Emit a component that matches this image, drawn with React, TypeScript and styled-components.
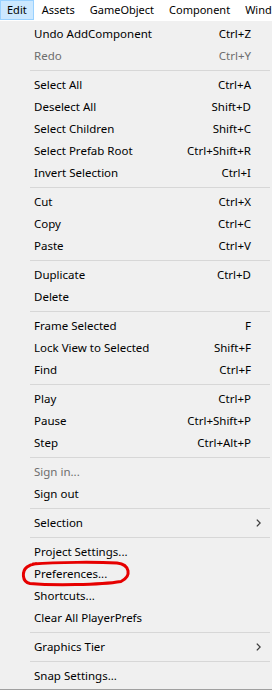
import styled, { createGlobalStyle } from "styled-components";

const GlobalStyle = createGlobalStyle`
  html, body {
    margin: 0;
    padding: 0;
    background: #ffffff;
  }
  body {
    font-family: "Noto Sans", "Open Sans", sans-serif;
    font-size: 11.5px;
    color: #000000;
    overflow: hidden;
  }
`;

type Item = {
  label: string;
  shortcut?: string;
  disabled?: boolean;
  submenu?: boolean;
  circled?: boolean;
};

const groups: Item[][] = [
  [
    { label: "Undo AddComponent", shortcut: "Ctrl+Z" },
    { label: "Redo", shortcut: "Ctrl+Y", disabled: true },
  ],
  [
    { label: "Select All", shortcut: "Ctrl+A" },
    { label: "Deselect All", shortcut: "Shift+D" },
    { label: "Select Children", shortcut: "Shift+C" },
    { label: "Select Prefab Root", shortcut: "Ctrl+Shift+R" },
    { label: "Invert Selection", shortcut: "Ctrl+I" },
  ],
  [
    { label: "Cut", shortcut: "Ctrl+X" },
    { label: "Copy", shortcut: "Ctrl+C" },
    { label: "Paste", shortcut: "Ctrl+V" },
  ],
  [
    { label: "Duplicate", shortcut: "Ctrl+D" },
    { label: "Delete" },
  ],
  [
    { label: "Frame Selected", shortcut: "F" },
    { label: "Lock View to Selected", shortcut: "Shift+F" },
    { label: "Find", shortcut: "Ctrl+F" },
  ],
  [
    { label: "Play", shortcut: "Ctrl+P" },
    { label: "Pause", shortcut: "Ctrl+Shift+P" },
    { label: "Step", shortcut: "Ctrl+Alt+P" },
  ],
  [
    { label: "Sign in...", disabled: true },
    { label: "Sign out" },
  ],
  [{ label: "Selection", submenu: true }],
  [
    { label: "Project Settings..." },
    { label: "Preferences...", circled: true },
    { label: "Shortcuts..." },
    { label: "Clear All PlayerPrefs" },
  ],
  [{ label: "Graphics Tier", submenu: true }],
  [{ label: "Snap Settings..." }],
];

const menuBarItems = ["Edit", "Assets", "GameObject", "Component", "Wind"];

const MenuBar = styled.div`
  display: flex;
  align-items: flex-start;
  height: 21px;
  background: #ffffff;
  font-size: 11px;
  white-space: nowrap;
  overflow: hidden;
`;

const BarItem = styled.div<{ $active?: boolean }>`
  height: 20px;
  line-height: 17px;
  padding: 0 6px;
  margin-right: 1px;
  box-sizing: border-box;
  border: 1px solid ${(p) => (p.$active ? "#99d1ff" : "transparent")};
  background: ${(p) => (p.$active ? "#cce8ff" : "transparent")};
`;

const Dropdown = styled.div`
  width: 272px;
  background: #f0f0f0;
  padding: 2px 0;
  border-bottom: 1px solid #a0a0a0;
  box-shadow: 0 1px 0 #6b6b6b;
`;

const Row = styled.div<{ $disabled?: boolean }>`
  position: relative;
  display: flex;
  align-items: center;
  height: 22px;
  line-height: 20px;
  padding-left: 34px;
  color: ${(p) => (p.$disabled ? "#6d6d6d" : "#000000")};
  white-space: nowrap;
`;

const Label = styled.span`
  flex: 1;
`;

const Shortcut = styled.span`
  text-align: right;
`;

const ArrowCell = styled.span`
  width: 21px;
  height: 22px;
  display: flex;
  align-items: center;
  padding-left: 5px;
  box-sizing: border-box;
`;

const Separator = styled.div`
  height: 7px;
  display: flex;
  align-items: center;
  padding: 0 2px 0 30px;

  &::after {
    content: "";
    flex: 1;
    height: 1px;
    background: #d7d7d7;
  }
`;

const Circle = styled.svg`
  position: absolute;
  left: 0;
  top: 0;
  overflow: visible;
  pointer-events: none;
`;

function Chevron() {
  return (
    <svg width="5" height="8" viewBox="0 0 5 8">
      <path d="M0.8 0.6 L4.2 4 L0.8 7.4" fill="none" stroke="#3c3c3c" strokeWidth="1.3" />
    </svg>
  );
}

function MenuRow({ item }: { item: Item }) {
  return (
    <Row $disabled={item.disabled}>
      <Label>{item.label}</Label>
      {item.shortcut && <Shortcut>{item.shortcut}</Shortcut>}
      <ArrowCell>{item.submenu && <Chevron />}</ArrowCell>
      {item.circled && (
        <Circle width="140" height="24">
          <path
            d="M33 1 C58 -1 98 -1 117 0 C130 1.5 132 13 121 18.5 C100 22 52 22.5 30 20.5 C21.5 19 22 8 27 4 C29 2.5 31 1.5 36 0.8"
            fill="none"
            stroke="#e60000"
            strokeWidth="3"
            strokeLinecap="round"
            strokeLinejoin="round"
          />
        </Circle>
      )}
    </Row>
  );
}

export default function App() {
  return (
    <>
      <GlobalStyle />
      <MenuBar>
        {menuBarItems.map((name, i) => (
          <BarItem key={name} $active={i === 0}>
            {name}
          </BarItem>
        ))}
      </MenuBar>
      <Dropdown>
        {groups.map((group, gi) => (
          <div key={gi}>
            {gi > 0 && <Separator />}
            {group.map((item) => (
              <MenuRow key={item.label} item={item} />
            ))}
          </div>
        ))}
      </Dropdown>
    </>
  );
}
